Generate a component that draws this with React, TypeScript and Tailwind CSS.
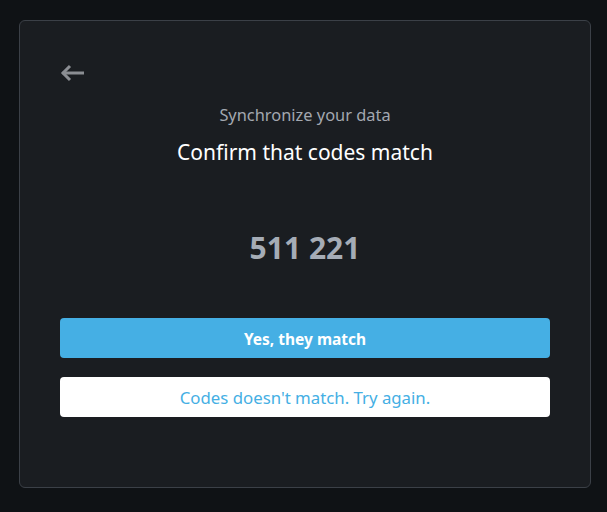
export default function App() {
  return (
    <div className="min-h-[512px] w-full bg-[#0f1215] pl-[19px] pt-[20px] font-['Noto_Sans','Open_Sans',sans-serif]">
      <div className="flex h-[468px] w-[572px] flex-col rounded-[6px] border border-[#3b4047] bg-[#1a1d21] px-[40px] pt-[40px]">
        <button className="flex h-[24px] w-[28px] items-center text-[#8b8e93]" title="Back">
          <svg width="26" height="18" viewBox="0 0 26 18" fill="none" stroke="currentColor" strokeWidth="3">
            <path d="M2.5 9H24" />
            <path d="M10 2L3 9l7 7" strokeLinejoin="miter" />
          </svg>
        </button>
        <p className="mt-[19px] text-center text-[16.4px] leading-[22px] text-[#a3a8b0]">Synchronize your data</p>
        <h2 className="mt-[12px] text-center text-[21px] leading-[28px] text-white">Confirm that codes match</h2>
        <div className="mt-[63px] text-center text-[30px] font-bold leading-[38px] text-[#a5acb6]">511 221</div>
        <button className="mt-[51px] h-[40px] w-full rounded-[4px] bg-[#45afe4] pt-[3px] text-[15.5px] font-bold text-white">
          Yes, they match
        </button>
        <button className="mt-[19px] h-[40px] w-full rounded-[4px] bg-white pt-[2px] text-[16.8px] text-[#45afe4]">
          Codes doesn't match. Try again.
        </button>
      </div>
    </div>
  );
}
